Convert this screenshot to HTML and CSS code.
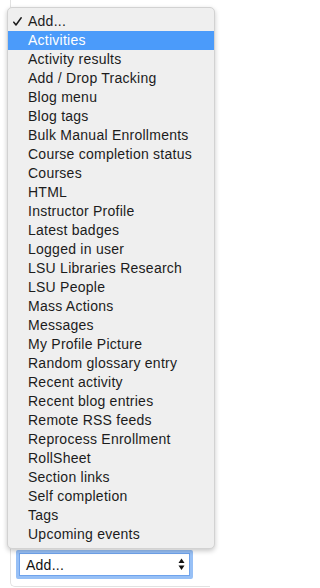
FILE: index.html
```html
<!DOCTYPE html>
<html>
<head>
<meta charset="utf-8">
<link rel="stylesheet" href="styles.css">
</head>
<body>
<div class="card">
  <div class="select">
    <span class="select-text">Add...</span>
    <svg class="arrows" width="7" height="13" viewBox="0 0 7 13"><path d="M3.5 0.5 L6.5 5 L0.5 5 Z" fill="#111"/><path d="M0.5 7.5 L6.5 7.5 L3.5 12 Z" fill="#111"/></svg>
  </div>
</div>
<ul class="menu">
  <li class="item checked"><svg class="check" width="9" height="9" viewBox="0 0 9 9"><path d="M0.8 5.2 L3 8 L8.2 0.8" fill="none" stroke="#1c1c1c" stroke-width="1.5" stroke-linecap="round" stroke-linejoin="round"/></svg>Add...</li>
  <li class="item active">Activities</li>
  <li class="item">Activity results</li>
  <li class="item">Add / Drop Tracking</li>
  <li class="item">Blog menu</li>
  <li class="item">Blog tags</li>
  <li class="item">Bulk Manual Enrollments</li>
  <li class="item">Course completion status</li>
  <li class="item">Courses</li>
  <li class="item">HTML</li>
  <li class="item">Instructor Profile</li>
  <li class="item">Latest badges</li>
  <li class="item">Logged in user</li>
  <li class="item">LSU Libraries Research</li>
  <li class="item">LSU People</li>
  <li class="item">Mass Actions</li>
  <li class="item">Messages</li>
  <li class="item">My Profile Picture</li>
  <li class="item">Random glossary entry</li>
  <li class="item">Recent activity</li>
  <li class="item">Recent blog entries</li>
  <li class="item">Remote RSS feeds</li>
  <li class="item">Reprocess Enrollment</li>
  <li class="item">RollSheet</li>
  <li class="item">Section links</li>
  <li class="item">Self completion</li>
  <li class="item">Tags</li>
  <li class="item">Upcoming events</li>
</ul>
</body>
</html>
```
FILE: styles.css
```css
html, body {
  margin: 0;
  padding: 0;
  background: #ffffff;
}
body {
  position: relative;
  width: 222px;
  height: 588px;
  overflow: hidden;
  font-family: "Liberation Sans", Arial, sans-serif;
  font-size: 14px;
  letter-spacing: 0.25px;
  color: #1c1c1c;
}
.card {
  margin-left: 10px;
  width: 200px;
  height: 587px;
  border-left: 1px solid #e2e2e2;
  border-bottom: 1px solid #e2e2e2;
  border-bottom-left-radius: 5px;
  box-sizing: border-box;
  padding-top: 550px;
}
.select {
  margin-left: 5px;
  width: 177px;
  height: 29px;
  box-sizing: border-box;
  border: 3px solid #97c0f6;
  box-shadow: inset 0 0 0 1px #6fa3ec;
  border-radius: 2px;
  background: #ffffff;
  display: flex;
  align-items: center;
  justify-content: space-between;
  padding: 0 5px 0 7px;
}
.select-text {
  color: #111;
}
.arrows {
  display: block;
}
.menu {
  position: absolute;
  left: 7px;
  top: 7px;
  width: 208px;
  box-sizing: border-box;
  margin: 0;
  padding: 4px 0 4px 0;
  list-style: none;
  background: #efefef;
  border: 1px solid #d2d2d2;
  border-radius: 5px;
  box-shadow: 0 2px 5px rgba(0, 0, 0, 0.22);
}
.item {
  position: relative;
  height: 19px;
  line-height: 19px;
  padding-left: 20px;
  white-space: nowrap;
}
.item.active {
  background: #4b9bfa;
  color: #ffffff;
}
.check {
  position: absolute;
  left: 5px;
  top: 5px;
  display: block;
}
```
